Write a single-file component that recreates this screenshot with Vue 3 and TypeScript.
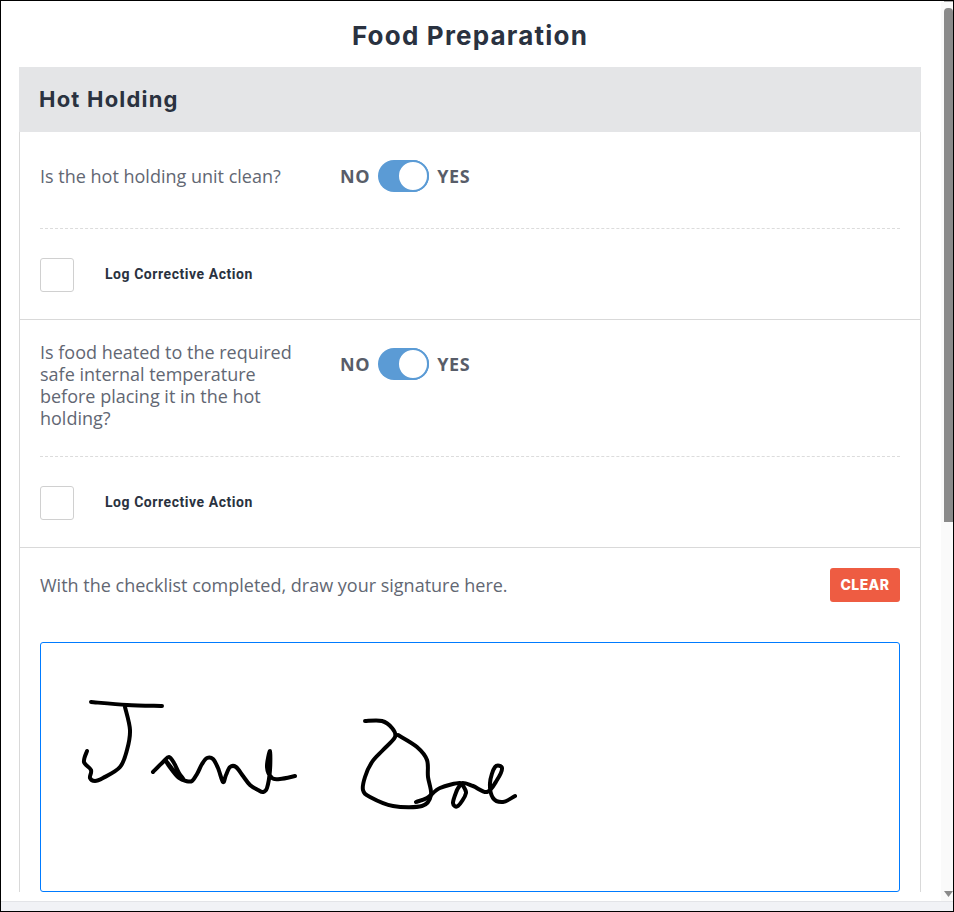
<script setup lang="ts">
type Pt = [number, number]

const strokes: Pt[][] = [
  [[91, 702], [127, 705], [162, 706]],
  [[125, 707], [130, 730], [127, 750], [120, 767], [103, 778], [95, 781], [90, 778], [91, 770], [84, 762], [87, 751]],
  [[153, 772], [163, 762], [169, 757], [174, 763], [179, 773], [184, 780], [178, 776], [170, 766], [166, 761], [172, 770], [179, 778], [186, 781], [192, 781], [197, 774], [202, 764], [207, 758], [213, 759], [218, 768], [223, 782], [226, 775], [230, 767], [236, 767], [243, 776], [250, 785], [258, 790], [263, 792], [267, 788], [270, 770], [270, 751], [267, 767], [272, 778], [280, 779], [295, 776]],
  [[365, 721], [382, 721], [392, 728], [395, 737], [383, 750], [372, 762], [365, 777], [363, 790], [370, 797], [393, 806], [422, 806], [431, 795], [428, 777], [427, 760], [417, 747], [398, 735]],
  [[416, 802], [427, 798], [440, 788], [460, 783], [457, 790], [453, 803], [458, 806], [466, 793], [462, 783], [473, 786], [487, 792], [497, 780], [502, 768], [495, 767], [490, 783], [493, 798], [503, 802], [515, 796]],
]

function smooth(pts: Pt[]): string {
  let d = `M${pts[0][0]} ${pts[0][1]}`
  for (let i = 0; i < pts.length - 1; i++) {
    const p0 = pts[Math.max(i - 1, 0)]
    const p1 = pts[i]
    const p2 = pts[i + 1]
    const p3 = pts[Math.min(i + 2, pts.length - 1)]
    const c1x = p1[0] + (p2[0] - p0[0]) / 6
    const c1y = p1[1] + (p2[1] - p0[1]) / 6
    const c2x = p2[0] - (p3[0] - p1[0]) / 6
    const c2y = p2[1] - (p3[1] - p1[1]) / 6
    d += ` C${c1x.toFixed(1)} ${c1y.toFixed(1)} ${c2x.toFixed(1)} ${c2y.toFixed(1)} ${p2[0]} ${p2[1]}`
  }
  return d
}

const paths = strokes.map(smooth)

const questions = [
  { text: 'Is the hot holding unit clean?', short: true },
  { text: 'Is food heated to the required safe internal temperature before placing it in the hot holding?', short: false },
]
</script>

<template>
  <div class="window">
    <div class="body">
      <main class="page">
        <h1 class="title">Food Preparation</h1>
        <section class="card">
          <h2 class="card-head">Hot Holding</h2>
          <div v-for="q in questions" :key="q.text" class="item">
            <div class="q-row" :class="{ short: q.short }">
              <p class="question">{{ q.text }}</p>
              <div class="switch">
                <span class="opt">NO</span>
                <span class="track"><span class="knob"></span></span>
                <span class="opt">YES</span>
              </div>
            </div>
            <div class="log-row">
              <span class="box"></span>
              <span class="log-label">Log Corrective Action</span>
            </div>
          </div>
          <div class="sign">
            <div class="sign-head">
              <p class="sign-text">With the checklist completed, draw your signature here.</p>
              <button class="clear" type="button">CLEAR</button>
            </div>
            <div class="pad">
              <svg class="ink" viewBox="41 643 858 248" width="858" height="248" fill="none">
                <path v-for="(d, i) in paths" :key="i" :d="d" stroke="#000" stroke-width="4" stroke-linecap="round" stroke-linejoin="round" />
              </svg>
            </div>
          </div>
        </section>
      </main>
      <aside class="scrollbar">
        <span class="arrow-top"></span>
        <span class="thumb"></span>
        <svg class="arrow" width="9" height="6" viewBox="0 0 9 6"><path d="M0 0H9L4.5 6Z" fill="#8a8a8a" /></svg>
      </aside>
    </div>
    <div class="hbar"></div>
  </div>
</template>

<style>
html, body { margin: 0; padding: 0; background: #fff; }
</style>

<style scoped>
.window {
  width: 954px;
  height: 912px;
  box-sizing: border-box;
  border: 1px solid #000;
  display: flex;
  flex-direction: column;
  overflow: hidden;
  background: #fff;
  font-family: "Open Sans", sans-serif;
}
.body {
  flex: 1;
  min-height: 0;
  display: flex;
}
.page {
  flex: 1;
  min-width: 0;
  padding: 0 20px 0 18px;
  overflow: hidden;
}
.title {
  margin: 0;
  height: 66px;
  line-height: 70px;
  text-align: center;
  font-family: Inter, sans-serif;
  font-size: 26px;
  font-weight: 700;
  letter-spacing: 1.2px;
  color: #2a3240;
}
.card {
  border: 1px solid #d9d9d9;
  border-top: 0;
  border-bottom: 0;
}
.card-head {
  margin: 0 -1px;
  height: 65px;
  line-height: 64px;
  padding-left: 20px;
  background: #e4e5e7;
  font-family: Inter, sans-serif;
  font-size: 22px;
  font-weight: 700;
  letter-spacing: 1.2px;
  color: #2a3240;
}
.item {
  padding: 0 20px;
  border-bottom: 1px solid #d9d9d9;
}
.q-row {
  display: flex;
  padding: 21px 0 27px;
  border-bottom: 1px dashed #dcdcdc;
}
.q-row.short { padding: 22px 0 30px; }
.question {
  width: 270px;
  margin: 0 30px 0 0;
  min-height: 44px;
  display: flex;
  align-items: center;
  font-size: 18px;
  line-height: 22px;
  color: #626773;
}
.q-row:not(.short) .switch { margin-top: 7px; }
.switch {
  display: flex;
  align-items: center;
  gap: 8px;
  height: 32px;
  margin-top: 6px;
}
.opt {
  font-size: 18px;
  font-weight: 700;
  letter-spacing: 0.6px;
  color: #585d69;
}
.track {
  position: relative;
  width: 51px;
  height: 32px;
  box-sizing: border-box;
  border-radius: 16px;
  background: #5b9bd5;
}
.knob {
  position: absolute;
  top: 0;
  right: 0;
  width: 32px;
  height: 32px;
  box-sizing: border-box;
  border: 2px solid #5b9bd5;
  border-radius: 50%;
  background: #fff;
}
.log-row {
  display: flex;
  align-items: center;
  gap: 31px;
  padding: 29px 0 27px;
}
.box {
  width: 34px;
  height: 34px;
  box-sizing: border-box;
  border: 1px solid #d0d0d0;
  border-radius: 3px;
  background: #fff;
}
.log-label {
  font-family: Roboto, sans-serif;
  font-size: 14px;
  line-height: 32px;
  height: 34px;
  font-weight: 700;
  letter-spacing: 0.55px;
  color: #2a3240;
}
.sign {
  padding: 20px 20px 0;
}
.sign-head {
  display: flex;
  justify-content: space-between;
  align-items: center;
}
.sign-text {
  margin: 0;
  font-size: 18px;
  line-height: 34px;
  color: #626773;
}
.clear {
  width: 70px;
  height: 34px;
  padding: 0 0 2px;
  border: 0;
  border-radius: 3px;
  background: #ee5c42;
  color: #fff;
  font-family: Inter, sans-serif;
  font-size: 14px;
  font-weight: 800;
  letter-spacing: 0.4px;
}
.pad {
  margin-top: 40px;
  height: 250px;
  box-sizing: border-box;
  border: 1px solid #007bff;
  border-radius: 3px;
}
.ink { display: block; }
.scrollbar {
  position: relative;
  width: 12px;
  flex: none;
  background: #fafafa;
  display: flex;
  flex-direction: column;
  align-items: flex-end;
}
.arrow-top {
  width: 9px;
  height: 1px;
  background: #a8a8a8;
}
.thumb {
  margin-top: 6px;
  width: 9px;
  height: 514px;
  border-radius: 4px 4px 0 0;
  background: #8a8a8a;
}
.arrow {
  position: absolute;
  right: 0;
  top: 890px;
}
.hbar {
  height: 9px;
  flex: none;
  background: #f1f2f6;
  border-top: 1px solid #e3e4e8;
}
</style>
